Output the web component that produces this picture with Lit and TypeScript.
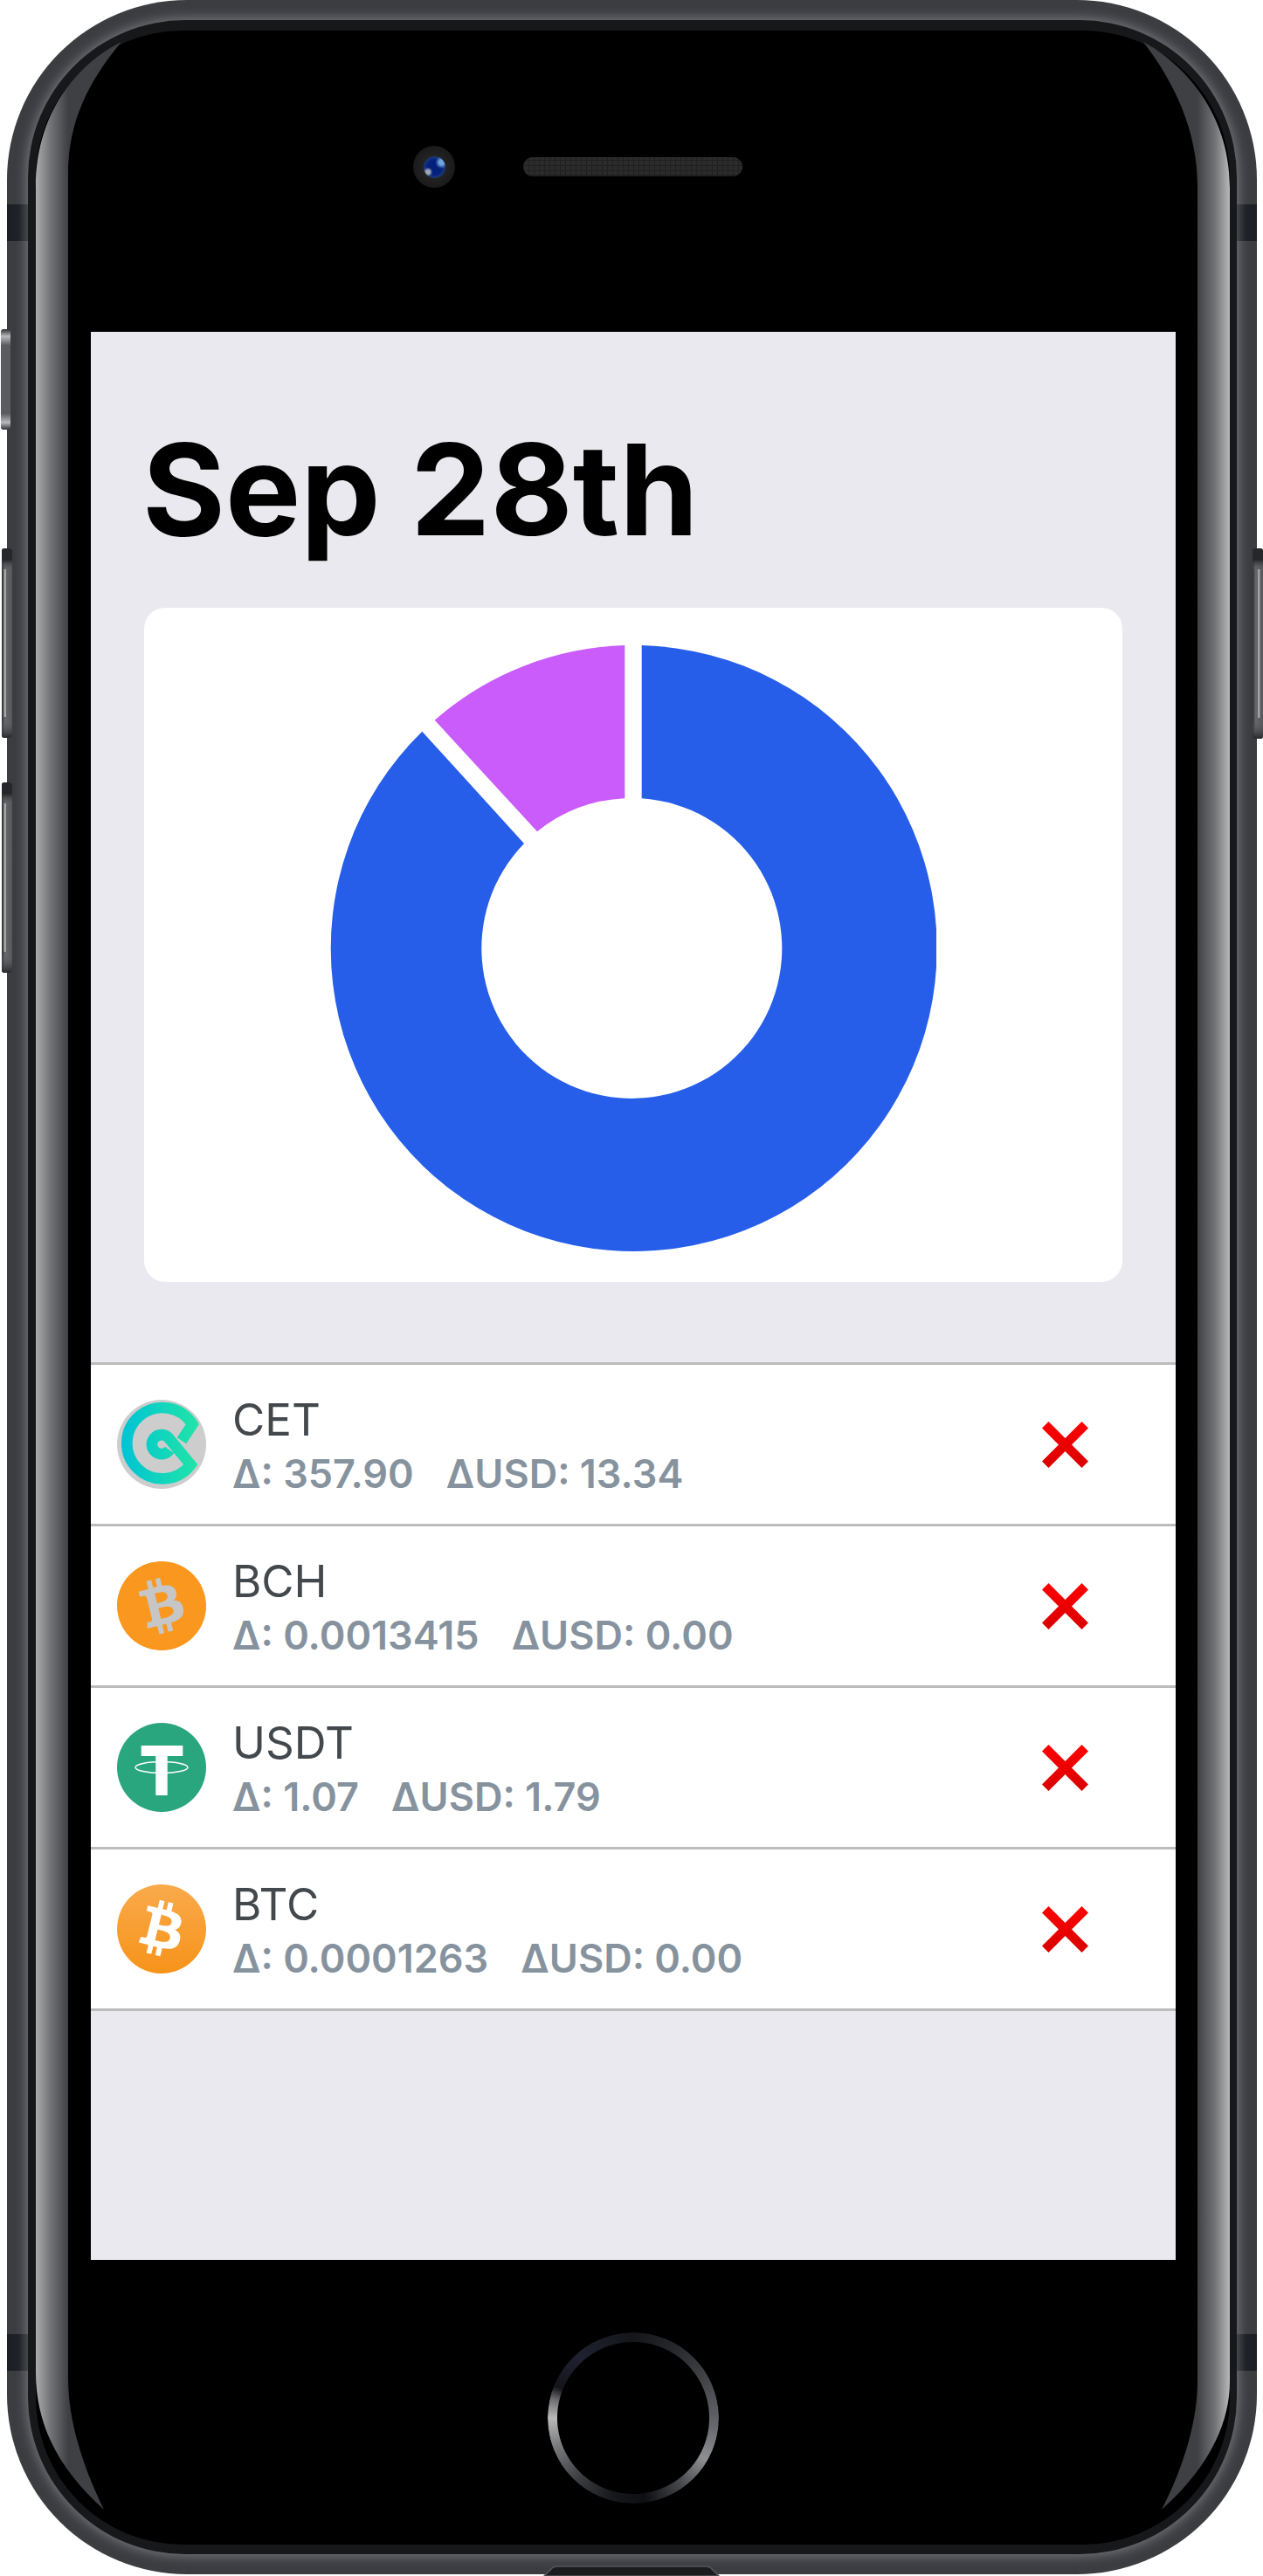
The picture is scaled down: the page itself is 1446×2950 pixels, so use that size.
import { LitElement, html, css, svg } from "lit";
import { customElement } from "lit/decorators.js";

const BTC_PATH =
  "M23.638 14.904c-1.602 6.43-8.113 10.34-14.542 8.736C2.67 22.05-1.244 15.525.362 9.105 1.962 2.67 8.475-1.243 14.9.358c6.43 1.605 10.342 8.115 8.738 14.548v-.002zm-6.35-4.613c.24-1.59-.974-2.45-2.64-3.03l.54-2.153-1.315-.33-.525 2.107c-.345-.087-.705-.167-1.064-.25l.526-2.127-1.32-.33-.54 2.165c-.285-.067-.565-.132-.84-.2l-1.815-.45-.35 1.407s.975.225.955.236c.535.136.63.486.615.766l-1.477 5.92c-.075.166-.24.406-.614.314.015.02-.96-.24-.96-.24l-.66 1.51 1.71.426.93.242-.54 2.19 1.32.327.54-2.17c.36.1.705.19 1.05.273l-.51 2.154 1.32.33.545-2.19c2.24.427 3.93.257 4.64-1.774.57-1.637-.03-2.58-1.217-3.196.854-.193 1.5-.76 1.68-1.93h.01zm-3.01 4.22c-.404 1.64-3.157.75-4.05.53l.72-2.9c.896.23 3.757.67 3.33 2.37zm.41-4.24c-.37 1.49-2.662.735-3.405.55l.654-2.64c.744.18 3.137.524 2.75 2.084v.006z";

interface Coin {
  symbol: "CET" | "BCH" | "USDT" | "BTC";
  delta: string;
  usd: string;
}

const COINS: Coin[] = [
  { symbol: "CET", delta: "357.90", usd: "13.34" },
  { symbol: "BCH", delta: "0.0013415", usd: "0.00" },
  { symbol: "USDT", delta: "1.07", usd: "1.79" },
  { symbol: "BTC", delta: "0.0001263", usd: "0.00" },
];

function coinIcon(symbol: Coin["symbol"]) {
  switch (symbol) {
    case "CET":
      return html`<svg class="icon" viewBox="0 0 306 306">
        <defs>
          <linearGradient id="cet" x1="13" y1="0" x2="285" y2="0" gradientUnits="userSpaceOnUse">
            <stop offset="0" stop-color="#00c3d6" />
            <stop offset="1" stop-color="#22e5a6" />
          </linearGradient>
        </defs>
        <circle cx="153" cy="153" r="153" fill="#cdcdcd" />
        <path
          d="M222 140 L259 84 A122 122 0 1 0 253 223 L176 130 A33 33 0 1 0 180 172"
          fill="none"
          stroke="url(#cet)"
          stroke-width="38"
        />
      </svg>`;
    case "BCH":
      return html`<svg class="icon" viewBox="0 0 24 24">
        <circle cx="12" cy="12" r="11.9" fill="#f9971f" />
        <circle cx="12" cy="12" r="10" fill="#c6c6c6" />
        <g transform="rotate(-28 12 12)"><path d=${BTC_PATH} fill="#f9971f" /></g>
      </svg>`;
    case "USDT":
      return html`<svg class="icon" viewBox="0 0 102 102">
        <circle cx="51" cy="51" r="51" fill="#2aa67f" />
        <rect x="27.7" y="26" width="47.6" height="12" fill="#fff" />
        <rect x="44.3" y="38" width="13.4" height="45" fill="#fff" />
        <ellipse cx="51" cy="51" rx="30" ry="6.4" fill="none" stroke="#fff" stroke-width="1.5" />
      </svg>`;
    case "BTC":
      return html`<svg class="icon" viewBox="0 0 24 24">
        <defs>
          <linearGradient id="btc" x1="0" y1="0" x2="0" y2="1">
            <stop offset="0" stop-color="#f9aa4b" />
            <stop offset="1" stop-color="#f7931a" />
          </linearGradient>
        </defs>
        <circle cx="12" cy="12" r="11.6" fill="#fff" />
        <path d=${BTC_PATH} fill="url(#btc)" />
      </svg>`;
  }
}

const sideButton = (x: number, y: number, w: number, h: number, lineX: number) => svg`
  <rect x=${x} y=${y} width=${w} height=${h} rx="3" fill="url(#btnBody)" />
  <rect x=${x} y=${y} width=${w} height=${h} rx="3" fill="url(#btnCaps)" />
  <rect x=${lineX} y=${y + 24} width="2.5" height=${h - 48} fill="#b4b5b6" opacity="0.8" />
`;

@customElement("app-root")
export class AppRoot extends LitElement {
  static styles = css`
    :host {
      display: block;
      position: relative;
      width: 1446px;
      height: 2950px;
      background: #fff;
      overflow: hidden;
      font-family: Inter, "Liberation Sans", sans-serif;
    }
    .device {
      box-sizing: border-box;
      width: 1431px;
      height: 2948px;
      margin-left: 8px;
      padding: 23px 23px 23px 24px;
      border-radius: 206px;
      background: #3b3d41;
      overflow: hidden;
    }
    .rim {
      box-sizing: border-box;
      height: 100%;
      padding: 12px 8px 11px 9px;
      border-radius: 180px;
      background: #17181a;
      box-shadow: 0 0 13px 2px #76787c;
    }
    .panel {
      display: flex;
      flex-direction: column;
      height: 100%;
      border-radius: 168px;
      background: #000;
    }
    .top-bezel {
      box-sizing: border-box;
      display: flex;
      align-items: center;
      height: 345px;
      padding: 132px 0 165px 432px;
    }
    .camera {
      display: flex;
      align-items: center;
      justify-content: center;
      width: 48px;
      height: 48px;
      border-radius: 50%;
      background: radial-gradient(circle, #222 40%, #131313 100%);
    }
    .lens {
      width: 25px;
      height: 25px;
      border-radius: 50%;
      background: radial-gradient(circle at 20% 72%, #9fa7b5 0 8%, transparent 20%),
        radial-gradient(circle at 82% 28%, #6fa4dc 0 10%, transparent 26%),
        radial-gradient(circle at 50% 50%, #04207a 0 45%, #1f3f80 75%, #101b38 100%);
    }
    .speaker {
      width: 251px;
      height: 22px;
      margin-left: 78px;
      border-radius: 11px;
      background-color: #2b2b2b;
      background-image: repeating-linear-gradient(90deg, #202020 0 1.5px, transparent 1.5px 6px),
        repeating-linear-gradient(0deg, #202020 0 1.5px, transparent 1.5px 6px);
    }
    .screen {
      display: flex;
      flex-direction: column;
      box-sizing: border-box;
      width: 1242px;
      height: 2208px;
      margin-left: 63px;
      background: #e9e9ef;
    }
    h1 {
      margin: 0;
      padding: 120px 0 74px 59px;
      font-size: 145px;
      line-height: 122px;
      font-weight: 700;
      color: #000;
    }
    .card {
      display: flex;
      justify-content: center;
      box-sizing: border-box;
      height: 772px;
      margin: 0 61px;
      padding-top: 43px;
      background: #fff;
      border-radius: 24px;
    }
    .donut {
      display: block;
      width: 694px;
      height: 694px;
    }
    .list {
      margin-top: 92px;
      border-top: 3px solid #bcbcbc;
    }
    .row {
      display: flex;
      align-items: center;
      height: 182px;
      padding: 0 100px 0 30px;
      background: #fff;
      border-bottom: 3px solid #bcbcbc;
    }
    .icon {
      flex: none;
      display: block;
      width: 102px;
      height: 102px;
    }
    .text {
      flex: 1;
      margin-left: 30px;
      padding-top: 6px;
    }
    .name {
      font-size: 51px;
      line-height: 60px;
      color: #43484d;
    }
    .sub {
      display: flex;
      gap: 37px;
      margin-top: 2px;
      font-size: 45px;
      line-height: 60px;
      font-weight: 600;
      color: #86939e;
    }
    .remove {
      flex: none;
      display: block;
      width: 53px;
      height: 53px;
    }
    .bottom-bezel {
      flex: 1;
      display: flex;
      justify-content: center;
      padding-top: 83px;
    }
    .home {
      box-sizing: border-box;
      width: 196px;
      height: 196px;
      border-radius: 50%;
      background: conic-gradient(
        #15161a 0deg,
        #26272b 30deg,
        #46474b 65deg,
        #66676b 95deg,
        #8e8f91 120deg,
        #45464a 145deg,
        #0e0f12 172deg,
        #17181c 195deg,
        #3c3d41 222deg,
        #7a7b7d 250deg,
        #b8b8b8 270deg,
        #6e6e70 283deg,
        #14151a 292deg,
        #1f2130 318deg,
        #15161a 360deg
      );
      -webkit-mask: radial-gradient(circle, transparent 86.5px, #000 87.5px);
      mask: radial-gradient(circle, transparent 86.5px, #000 87.5px);
    }
    .overlay {
      position: absolute;
      inset: 0;
      pointer-events: none;
    }
  `;

  render() {
    return html`
      <div class="device">
        <div class="rim">
          <div class="panel">
            <div class="top-bezel">
              <div class="camera"><div class="lens"></div></div>
              <div class="speaker"></div>
            </div>
            <div class="screen">
              <h1>Sep 28th</h1>
              <div class="card">
                <svg class="donut" viewBox="378 739 694 694">
                  <path
                    d="M734.7 739.1A347 347 0 1 1 483.3 837.7L600 966A172 172 0 1 0 734.7 914.3Z"
                    fill="#265eea"
                  />
                  <path
                    d="M715.3 739.1A347 347 0 0 0 497.7 824.7L615 952.3A172 172 0 0 1 715.3 914.3Z"
                    fill="#c95cfa"
                  />
                </svg>
              </div>
              <div class="list">
                ${COINS.map(
                  (c) => html`<div class="row">
                    ${coinIcon(c.symbol)}
                    <div class="text">
                      <div class="name">${c.symbol}</div>
                      <div class="sub">
                        <span>Δ: ${c.delta}</span><span>ΔUSD: ${c.usd}</span>
                      </div>
                    </div>
                    <svg class="remove" viewBox="0 0 53 53">
                      <defs>
                        <linearGradient id="x-${c.symbol}" x1="0" y1="0" x2="0" y2="53" gradientUnits="userSpaceOnUse">
                          <stop offset="0" stop-color="#ff0000" />
                          <stop offset="1" stop-color="#d80000" />
                        </linearGradient>
                      </defs>
                      <path
                        d="M7.5 0 26.5 19 45.5 0 53 7.5 34 26.5 53 45.5 45.5 53 26.5 34 7.5 53 0 45.5 19 26.5 0 7.5Z"
                        fill="url(#x-${c.symbol})"
                      />
                    </svg>
                  </div>`
                )}
              </div>
            </div>
            <div class="bottom-bezel"><div class="home"></div></div>
          </div>
        </div>
      </div>
      <svg class="overlay" width="1446" height="2950" viewBox="0 0 1446 2950">
        <defs>
          <linearGradient id="gL" gradientUnits="userSpaceOnUse" x1="41" y1="0" x2="78" y2="0">
            <stop offset="0" stop-color="#abacac" />
            <stop offset="0.45" stop-color="#737477" />
            <stop offset="1" stop-color="#3f4044" />
          </linearGradient>
          <linearGradient id="gR" gradientUnits="userSpaceOnUse" x1="1371" y1="0" x2="1408" y2="0">
            <stop offset="0" stop-color="#3f4044" />
            <stop offset="0.55" stop-color="#737477" />
            <stop offset="1" stop-color="#b8b9b9" />
          </linearGradient>
          <linearGradient id="btnBody" x1="0" y1="0" x2="1" y2="0">
            <stop offset="0" stop-color="#2d2e31" />
            <stop offset="0.3" stop-color="#66676b" />
            <stop offset="1" stop-color="#56575b" />
          </linearGradient>
          <linearGradient id="btnCaps" x1="0" y1="0" x2="0" y2="1">
            <stop offset="0" stop-color="#27272a" />
            <stop offset="0.06" stop-color="#27272a" />
            <stop offset="0.12" stop-color="#6b6c70" stop-opacity="0" />
            <stop offset="0.9" stop-color="#6b6c70" stop-opacity="0" />
            <stop offset="1" stop-color="#27272a" />
          </linearGradient>
          <linearGradient id="btnShort" x1="0" y1="0" x2="0" y2="1">
            <stop offset="0" stop-color="#2d2e31" />
            <stop offset="0.07" stop-color="#b9babb" />
            <stop offset="0.16" stop-color="#5b5c60" />
            <stop offset="0.84" stop-color="#5b5c60" />
            <stop offset="0.93" stop-color="#b9babb" />
            <stop offset="1" stop-color="#2d2e31" />
          </linearGradient>
          <linearGradient id="band" x1="0" y1="0" x2="1" y2="0">
            <stop offset="0" stop-color="#1b1f25" />
            <stop offset="0.55" stop-color="#1f2227" />
            <stop offset="1" stop-color="#45474b" />
          </linearGradient>
          <linearGradient id="bandR" x1="1" y1="0" x2="0" y2="0">
            <stop offset="0" stop-color="#1b1f25" />
            <stop offset="0.55" stop-color="#1f2227" />
            <stop offset="1" stop-color="#45474b" />
          </linearGradient>
        </defs>

        <rect x="8" y="234" width="24" height="42" fill="url(#band)" />
        <rect x="8" y="2673" width="24" height="42" fill="url(#band)" />
        <rect x="1416" y="234" width="23" height="42" fill="url(#bandR)" />
        <rect x="1416" y="2673" width="23" height="42" fill="url(#bandR)" />

        <path
          d="M139 48C98 68 41 120 41 215L41 2717C41 2780 70 2830 119 2874C100 2835 78 2780 78 2723L78 200C78 140 100 95 139 48Z"
          fill="url(#gL)"
        />
        <path
          d="M1309 48C1350 70 1408 125 1408 215L1408 2727C1408 2780 1379 2830 1330 2874C1350 2835 1371 2780 1371 2727L1371 213C1371 150 1345 95 1309 48Z"
          fill="url(#gR)"
        />

        <rect x="1" y="377" width="11" height="115" rx="3" fill="url(#btnShort)" />
        ${sideButton(2, 628, 12, 217, 4.5)} ${sideButton(2, 896, 12, 218, 4.5)}
        ${sideButton(1434, 628, 12, 218, 1440)}

        <path d="M623 2950L632 2941Q634 2939 638 2939L808 2939Q812 2939 814 2941L823 2950Z" fill="#1b1c1e" stroke="#55565a" stroke-width="1.5" />
      </svg>
    `;
  }
}
